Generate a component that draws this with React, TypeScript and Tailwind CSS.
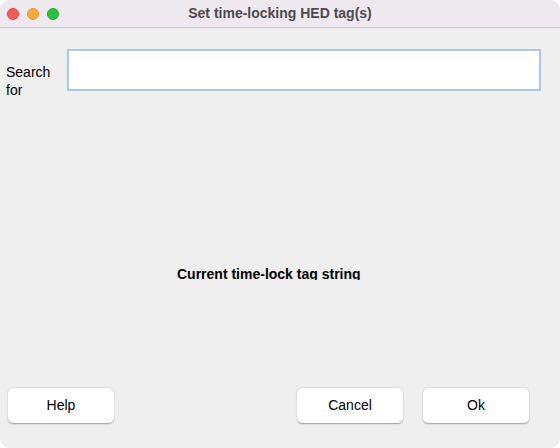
import React from 'react';

const font = { fontFamily: '"Liberation Sans", Arial, sans-serif' };

function Light({ color, border }: { color: string; border: string }) {
  return <span className={`w-3 h-3 rounded-full border ${color} ${border}`} />;
}

export default function App() {
  return (
    <div className="w-[560px] h-[448px] bg-white" style={font}>
      <div className="w-full h-full flex flex-col rounded-[10px] overflow-hidden bg-[#efefef]">
        {/* title bar */}
        <div className="relative h-[28px] shrink-0 bg-[#ede9ef] border-b border-[#c9c7cb] flex items-center">
          <div className="flex items-center gap-[8px] pl-[7px]">
            <Light color="bg-[#f25a55]" border="border-[#e0443e]" />
            <Light color="bg-[#f7ab36]" border="border-[#e0972a]" />
            <Light color="bg-[#2bc03f]" border="border-[#1fa82f]" />
          </div>
          <div className="absolute inset-0 flex items-center justify-center text-[14px] font-bold text-[#4c4a4e]">
            Set time-locking HED tag(s)
          </div>
        </div>

        {/* search row */}
        <div className="flex items-start mt-[21px]">
          <div className="w-[67px] pl-[6px] pt-[14px] text-[14px] leading-[18px] text-black">
            Search<br />for
          </div>
          <input
            className="w-[474px] h-[42px] bg-white border-2 border-[#a9c8ea] outline-none px-1 text-[14px]"
          />
        </div>

        {/* tag string label, clipped like the original */}
        <div className="mt-[166px] h-[15px] overflow-hidden pl-[177px] text-[14px] font-bold leading-[18px] text-black">
          Current time-lock tag string
        </div>

        {/* buttons */}
        <div className="flex items-center mt-[108px] px-[8px]">
          <button className="w-[106px] h-[35px] bg-white rounded-[5px] shadow-[0_0.5px_1.5px_rgba(0,0,0,0.35)] text-[14px] text-black">
            Help
          </button>
          <div className="flex-1" />
          <div className="flex gap-[20px] pr-[23px]">
            <button className="w-[106px] h-[35px] bg-white rounded-[5px] shadow-[0_0.5px_1.5px_rgba(0,0,0,0.35)] text-[14px] text-black">
              Cancel
            </button>
            <button className="w-[106px] h-[35px] bg-white rounded-[5px] shadow-[0_0.5px_1.5px_rgba(0,0,0,0.35)] text-[14px] text-black">
              Ok
            </button>
          </div>
        </div>
      </div>
    </div>
  );
}
